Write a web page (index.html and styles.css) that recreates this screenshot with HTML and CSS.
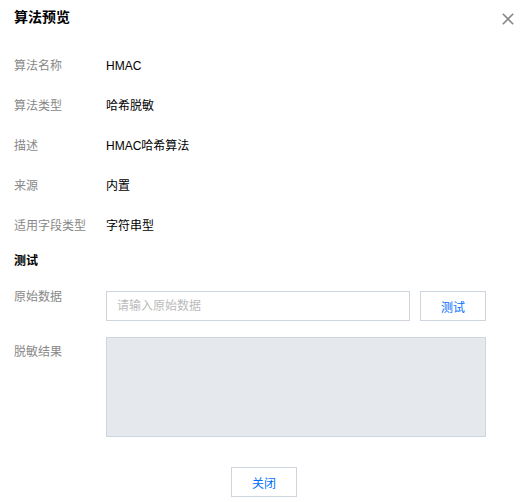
FILE: index.html
```html
<!DOCTYPE html>
<html lang="zh-CN">
<head>
<meta charset="utf-8">
<title>算法预览</title>
<link rel="stylesheet" href="styles.css">
</head>
<body>
<div class="dialog">
  <div class="header">
    <h3 class="title">算法预览</h3>
    <button class="close" aria-label="关闭">
      <svg width="12" height="12" viewBox="0 0 12 12"><path d="M0.8 0.8 L11.2 11.2 M11.2 0.8 L0.8 11.2" stroke="#888" stroke-width="1.6" fill="none"/></svg>
    </button>
  </div>
  <div class="info">
    <div class="row"><span class="label">算法名称</span><span class="value">HMAC</span></div>
    <div class="row"><span class="label">算法类型</span><span class="value">哈希脱敏</span></div>
    <div class="row"><span class="label">描述</span><span class="value">HMAC哈希算法</span></div>
    <div class="row"><span class="label">来源</span><span class="value">内置</span></div>
    <div class="row"><span class="label">适用字段类型</span><span class="value">字符串型</span></div>
  </div>
  <div class="section">测试</div>
  <div class="form-row input-row">
    <span class="label">原始数据</span>
    <input class="input" type="text" placeholder="请输入原始数据">
    <button class="btn">测试</button>
  </div>
  <div class="form-row result-row">
    <span class="label">脱敏结果</span>
    <div class="result"></div>
  </div>
  <div class="footer">
    <button class="btn">关闭</button>
  </div>
</div>
</body>
</html>
```
FILE: styles.css
```css
* { box-sizing: border-box; }
body {
  margin: 0;
  background: #fff;
  font-family: "Liberation Sans", "Noto Sans CJK SC", sans-serif;
  font-size: 12px;
  color: #000;
}
.dialog {
  width: 532px;
  padding: 7px 0 0 14px;
}
.header {
  display: flex;
  justify-content: space-between;
  align-items: flex-start;
  padding-right: 18px;
}
.title {
  margin: 0;
  font-size: 14px;
  line-height: 20px;
  font-weight: bold;
}
.close {
  margin-top: 6px;
  padding: 0;
  border: 0;
  background: none;
  width: 12px;
  height: 12px;
  display: block;
}
.close svg { display: block; }
.info {
  margin-top: 19px;
}
.row {
  display: flex;
  align-items: center;
  height: 40px;
}
.label {
  width: 92px;
  flex: none;
  color: #888;
  line-height: 20px;
}
.value {
  line-height: 20px;
}
.section {
  margin-top: 5px;
  font-weight: bold;
  line-height: 20px;
}
.form-row {
  display: flex;
  align-items: flex-start;
}
.input-row {
  margin-top: 20px;
}
.input-row .label { margin-top: -4px; }
.input {
  width: 304px;
  height: 30px;
  border: 1px solid #cfd5de;
  padding: 0 10px;
  font: inherit;
  color: #000;
  outline: none;
  margin: 0;
}
.input::placeholder { color: #bbb; }
.btn {
  width: 66px;
  height: 30px;
  border: 1px solid #cfd5de;
  background: #fff;
  color: #006eff;
  font: inherit;
  padding: 0;
  margin: 0;
}
.input-row .btn { margin-left: 10px; }
.result-row {
  margin-top: 16px;
}
.result-row .label { margin-top: 5px; }
.result {
  width: 380px;
  height: 100px;
  background: #e5e8ed;
  border: 1px solid #cfd5de;
}
.footer {
  margin-top: 30px;
  padding-left: 217px;
  display: flex;
}
```
